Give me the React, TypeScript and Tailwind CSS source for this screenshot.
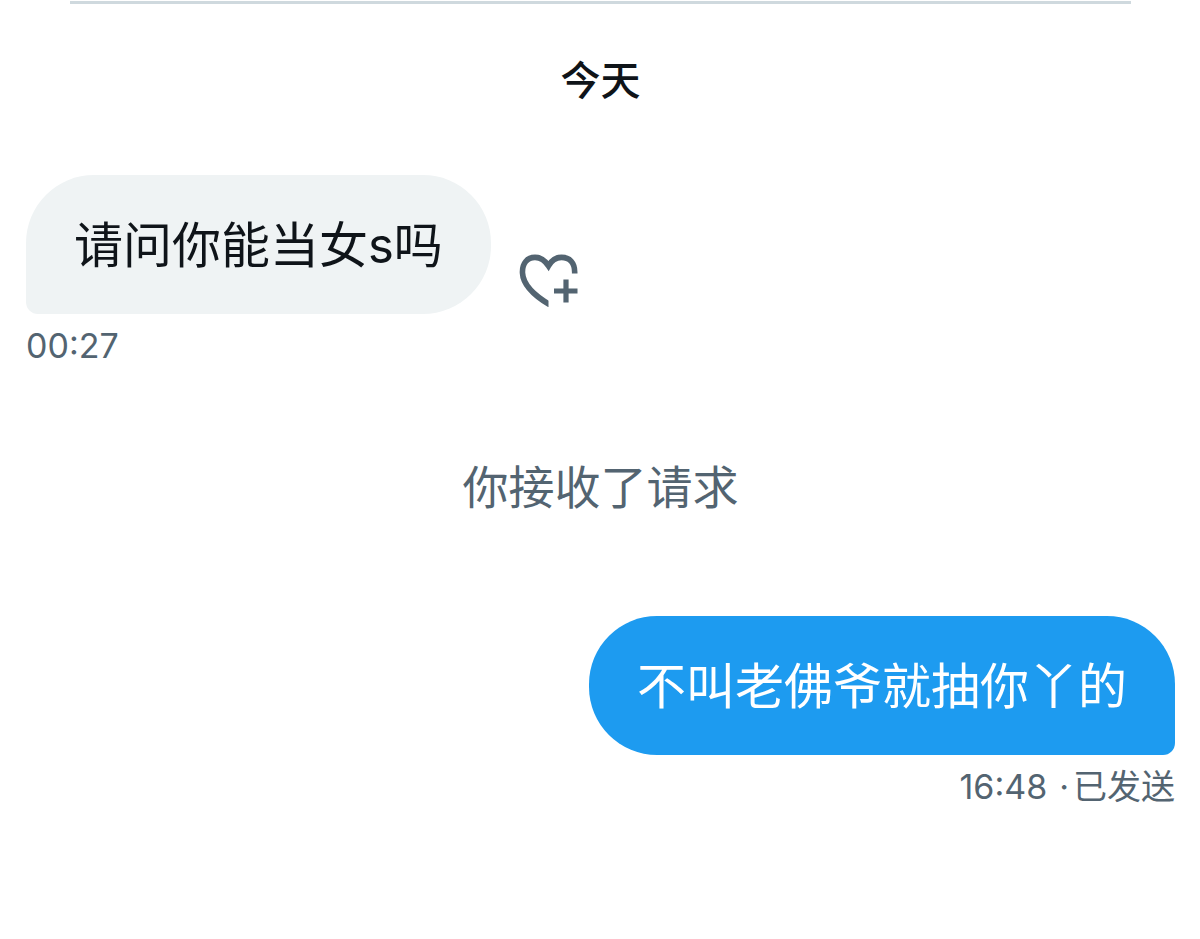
import React from 'react';

type Message = {
   text: string;
   time: string;
   status?: string;
   mine: boolean;
};

const received: Message = { text: '请问你能当女s吗', time: '00:27', mine: false };
const sent: Message = { text: '不叫老佛爷就抽你丫的', time: '16:48', status: '已发送', mine: true };

function HeartPlus() {
   return (
      <svg width="60" height="54" viewBox="0 0 60 54" fill="none" stroke="currentColor" aria-hidden="true">
         <clipPath id="heart-cut">
            <path d="M0 0H60V24H29.500V54H0Z" />
         </clipPath>
         <path
            clipPath="url(#heart-cut)"
            strokeWidth="5.6"
            d="M55.700 20.500C56.100 9 50 4.400 42.500 4.400C36.500 4.400 32.500 7.500 29.500 12.900C26 7.500 22 4.400 16 4.400C8.500 4.400 3 10 3.500 20C4 31 14 42 32 52.500"
         />
         <path strokeWidth="5.2" d="M35 38H58.500M47 26.500V49.500" />
      </svg>
   );
}

function Bubble({ message }: { message: Message }) {
   return (
      <article className={message.mine ? 'flex flex-col items-end' : 'flex flex-col items-start'}>
         <div className="flex items-end gap-7">
            <p
               className={
                  message.mine
                     ? 'rounded-[68px] rounded-br-xl bg-[#1d9bf0] px-12 pt-[35px] pb-[33px] text-[49px] leading-[71px] text-white'
                     : 'rounded-[68px] rounded-bl-xl bg-[#eff3f4] px-12 pt-[35px] pb-[33px] text-[49px] leading-[71px]'
               }
            >
               {message.text}
            </p>
            {!message.mine && (
               <button type="button" aria-label="添加心情" className="pb-[7px] text-[#536471]">
                  <HeartPlus />
               </button>
            )}
         </div>
         <p className="mt-3 flex items-baseline gap-1 text-[34px] leading-10 text-[#536471]">
            <time className="mr-2">{message.time}</time>
            {message.status && (
               <>
                  <span>·</span>
                  <span>{message.status}</span>
               </>
            )}
         </p>
      </article>
   );
}

export default function App() {
   return (
      <main
         lang="zh-CN"
         className="min-h-screen bg-white pr-[25px] pl-[26px] pt-px font-['Inter','Noto_Sans_CJK_SC',sans-serif] text-[#0f1419]"
      >
         <hr className="mx-11 border-t-3 border-[#cfd9de]" />
         <h2 className="mt-[53px] text-center text-[40px] leading-12 font-medium">今天</h2>

         <section className="mt-[70px]">
            <Bubble message={received} />
            <p className="mt-[93px] mb-[101px] text-center text-[46px] leading-14 text-[#536471]">你接收了请求</p>
            <Bubble message={sent} />
         </section>
      </main>
   );
}
